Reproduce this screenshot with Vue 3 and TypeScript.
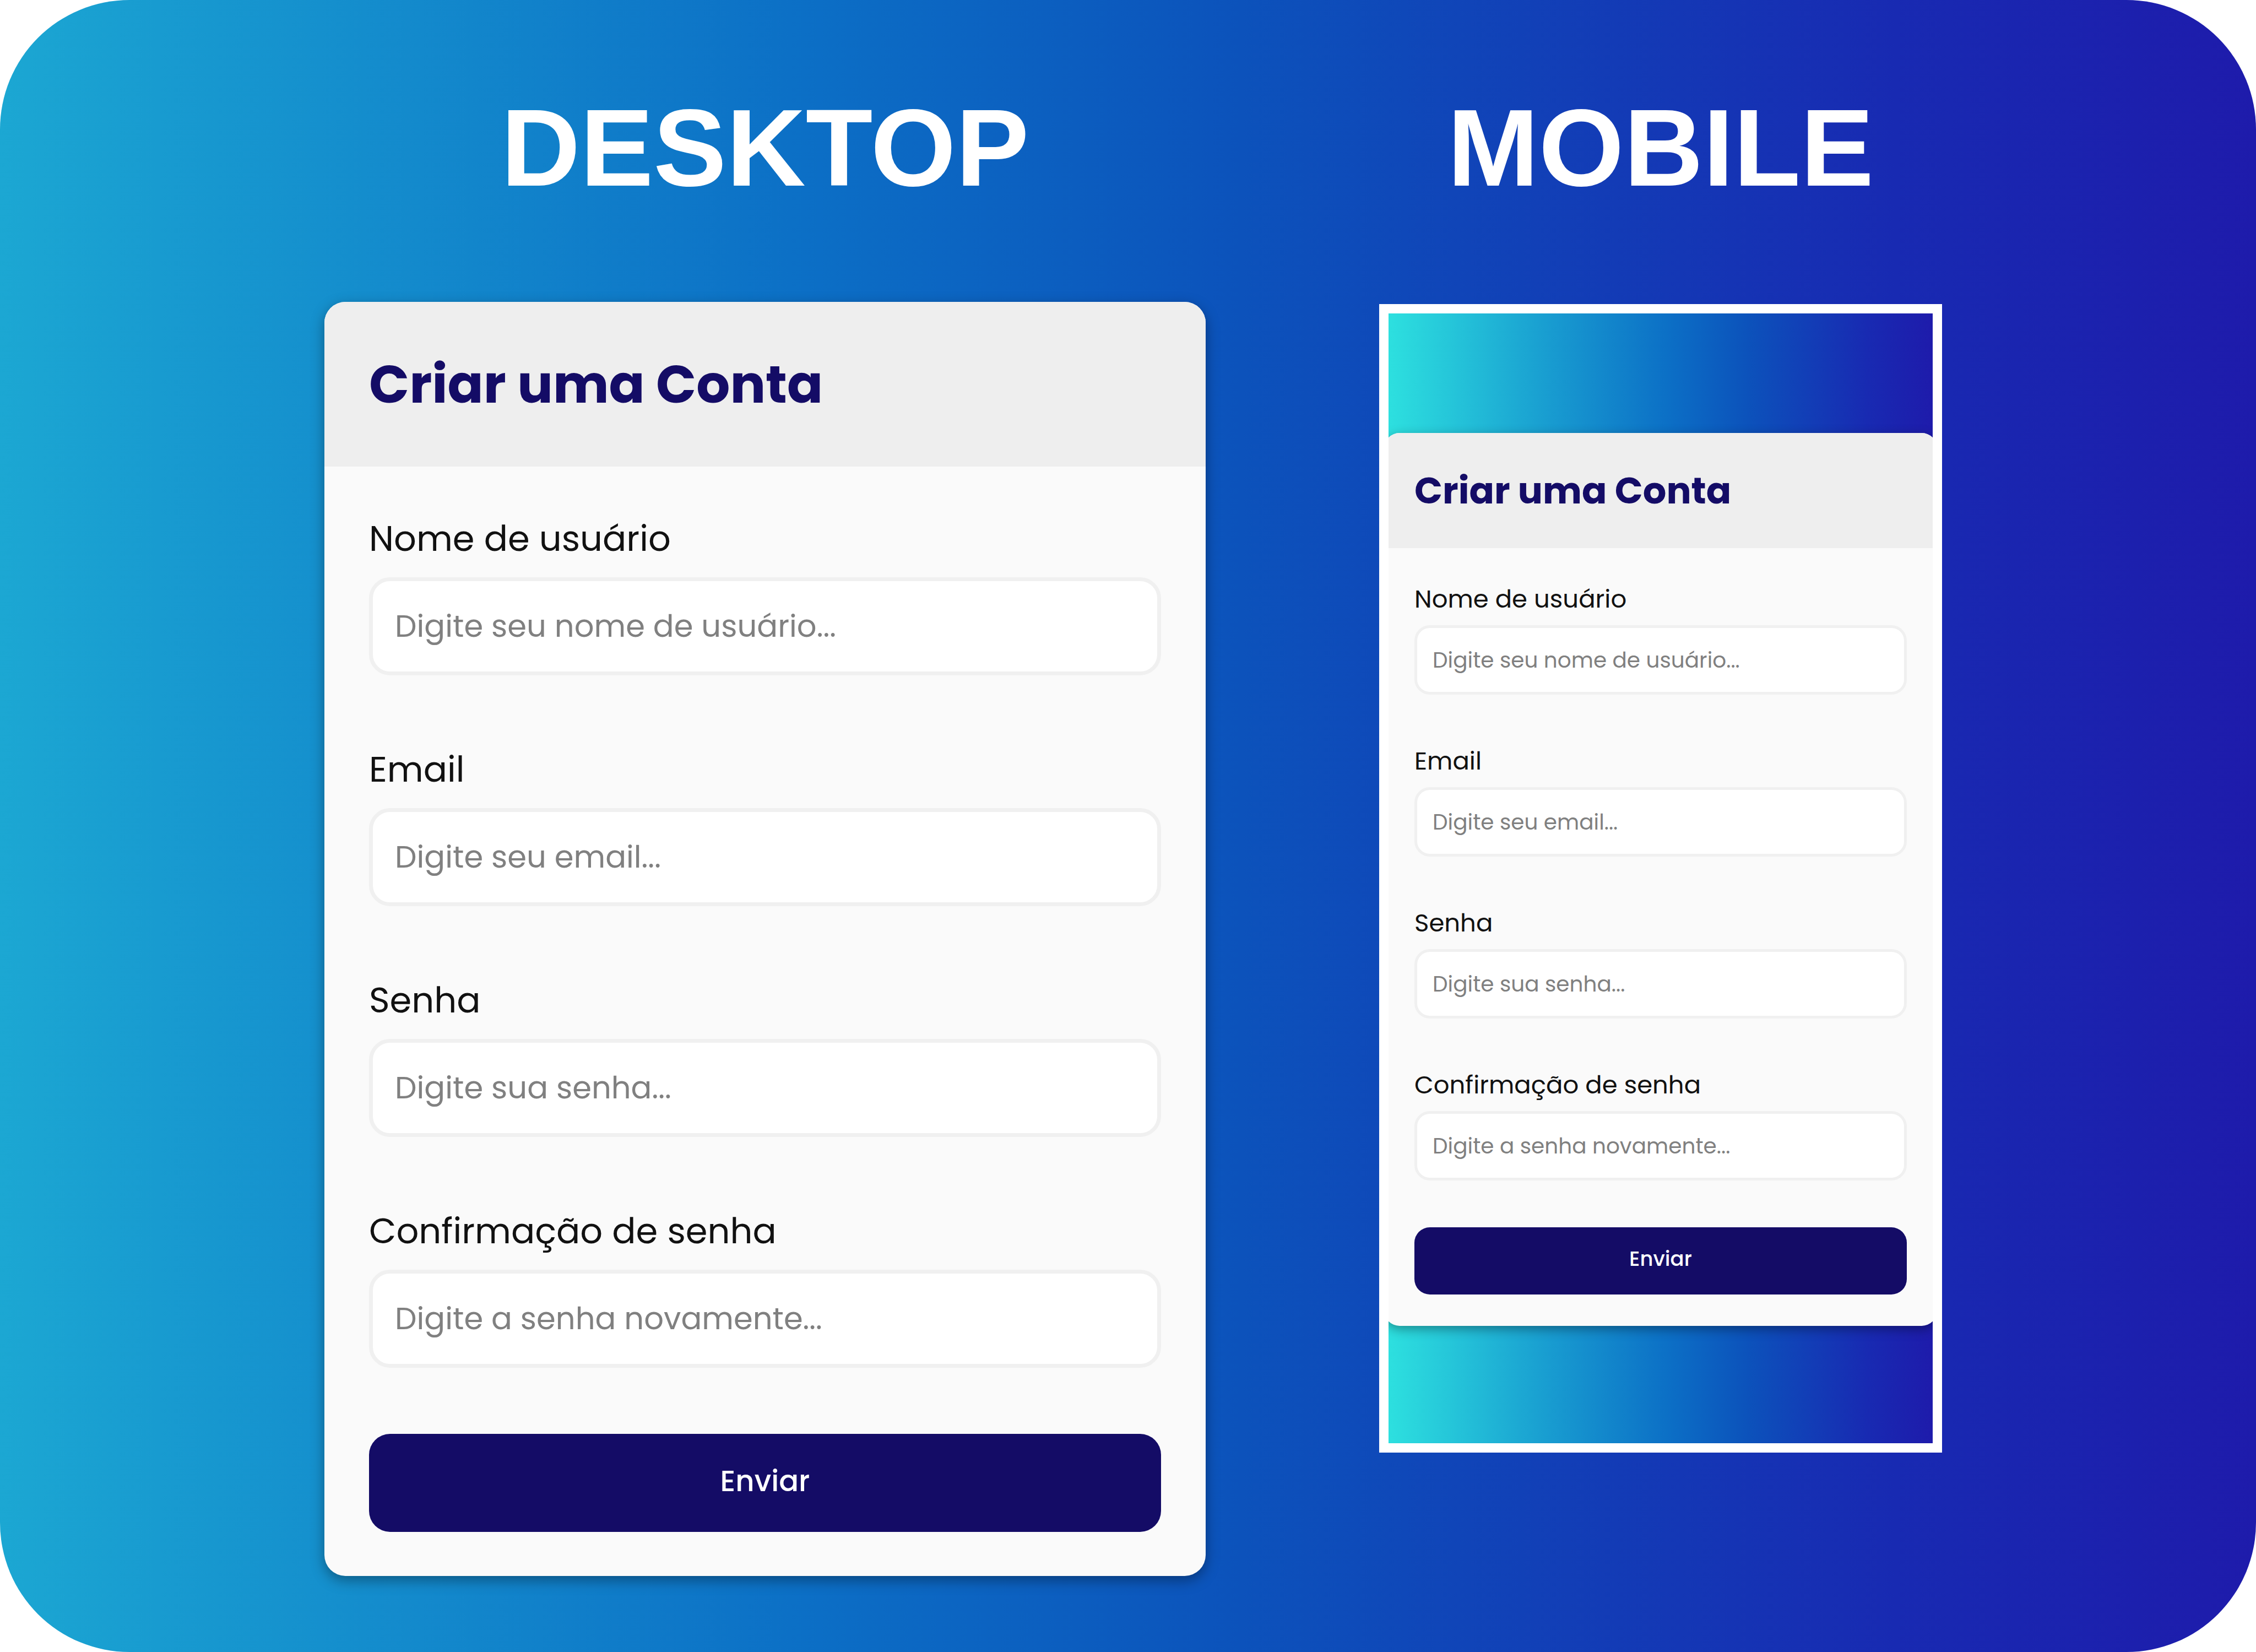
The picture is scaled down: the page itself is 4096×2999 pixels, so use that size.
<script setup lang="ts">
interface Field {
  name: string
  label: string
  type: string
  placeholder: string
}

interface View {
  id: string
  heading: string
}

const views: View[] = [
  { id: 'desktop', heading: 'DESKTOP' },
  { id: 'mobile', heading: 'MOBILE' },
]

const fields: Field[] = [
  { name: 'username', label: 'Nome de usuário', type: 'text', placeholder: 'Digite seu nome de usuário...' },
  { name: 'email', label: 'Email', type: 'email', placeholder: 'Digite seu email...' },
  { name: 'password', label: 'Senha', type: 'password', placeholder: 'Digite sua senha...' },
  { name: 'confirmation', label: 'Confirmação de senha', type: 'password', placeholder: 'Digite a senha novamente...' },
]
</script>

<template>
  <main class="stage">
    <section v-for="view in views" :key="view.id" class="view" :class="view.id">
      <h1 class="heading">{{ view.heading }}</h1>
      <div class="screen">
        <div class="card">
          <header class="card-header">
            <h2 class="title">Criar uma Conta</h2>
          </header>
          <form class="form" @submit.prevent>
            <div v-for="field in fields" :key="field.name" class="field">
              <label class="label" :for="`${view.id}-${field.name}`">{{ field.label }}</label>
              <input
                :id="`${view.id}-${field.name}`"
                class="input"
                :type="field.type"
                :name="field.name"
                :placeholder="field.placeholder"
              />
            </div>
            <button class="submit" type="submit">Enviar</button>
          </form>
        </div>
      </div>
    </section>
  </main>
</template>

<style>
body {
  margin: 0;
  background: #fff;
}
</style>

<style scoped>
.stage {
  box-sizing: border-box;
  min-height: 100vh;
  display: grid;
  grid-template-columns: 1600fr 1022fr;
  align-items: start;
  gap: 315px;
  padding: 169px 570px 138px 589px;
  border-radius: 235px;
  background: linear-gradient(
    to right,
    #2de0df -33%,
    #189bd0 7%,
    #0c70c6 35%,
    #0c52bb 55%,
    #182ab2 84%,
    #1e1bab 100%
  );
}

.view {
  display: flex;
  flex-direction: column;
  min-width: 0;
}

.heading {
  margin: 0;
  color: #fff;
  font: bold 199px/199px "Liberation Sans", Arial, sans-serif;
  text-align: center;
}

.card {
  background: #fafafa;
  font-family: Poppins, "Open Sans", sans-serif;
}

.card-header {
  background: #eee;
}

.title {
  margin: 0;
  color: #140c66;
  font-weight: 700;
}

.form,
.field {
  display: flex;
  flex-direction: column;
}

.label {
  color: #111;
}

.input,
.submit {
  box-sizing: border-box;
  width: 100%;
  font-family: inherit;
}

.input {
  border-style: solid;
  border-color: #f0f0f0;
  background: #fff;
  color: #111;
  outline: none;
}

.input::placeholder {
  color: #808080;
  opacity: 1;
}

.submit {
  border: 0;
  background: #140c66;
  color: #fff;
  font-weight: 500;
  cursor: pointer;
}

/* Desktop preview */
.desktop {
  gap: 180px;
}

.desktop .card {
  border-radius: 38px;
  box-shadow: 0 8px 24px rgba(0, 0, 0, 0.36);
}

.desktop .card-header {
  padding: 80px 81px;
  border-radius: 38px 38px 0 0;
}

.desktop .title {
  font-size: 96px;
  line-height: 139px;
}

.desktop .form {
  gap: 120px;
  padding: 80px 81px;
}

.desktop .field {
  gap: 19px;
}

.desktop .label {
  font-size: 64px;
  line-height: 102px;
}

.desktop .input,
.desktop .submit {
  height: 178px;
  border-radius: 38px;
}

.desktop .input {
  padding: 0 40px 2px;
  border-width: 7px;
  font-size: 56px;
}

.desktop .submit {
  padding: 0 40px 6px;
  font-size: 53px;
}

/* Mobile preview */
.mobile {
  gap: 184px;
}

.mobile .screen {
  overflow: hidden;
  padding: 217px 0 213px;
  border: 17px solid #fff;
  background: linear-gradient(
      to right,
      #2de0df,
      #189bd0 30%,
      #0c70c6 51%,
      #0c52bb 66%,
      #182ab2 88%,
      #1e1bab 100%
    )
    padding-box;
}

.mobile .card {
  margin: 0 -8px;
  border-radius: 28px;
  box-shadow: 0 6px 20px rgba(0, 0, 0, 0.36);
}

.mobile .card-header {
  padding: 56px 55px;
  border-radius: 28px 28px 0 0;
}

.mobile .title {
  font-size: 67px;
  line-height: 97px;
}

.mobile .form {
  gap: 85px;
  padding: 57px 55px;
}

.mobile .field {
  gap: 12px;
}

.mobile .label {
  font-size: 45px;
  line-height: 71px;
}

.mobile .input,
.mobile .submit {
  border-radius: 28px;
}

.mobile .input {
  height: 126px;
  padding: 0 28px;
  border-width: 5px;
  font-size: 39px;
}

.mobile .submit {
  height: 122px;
  padding: 0 28px 9px;
  font-size: 37px;
}
</style>
